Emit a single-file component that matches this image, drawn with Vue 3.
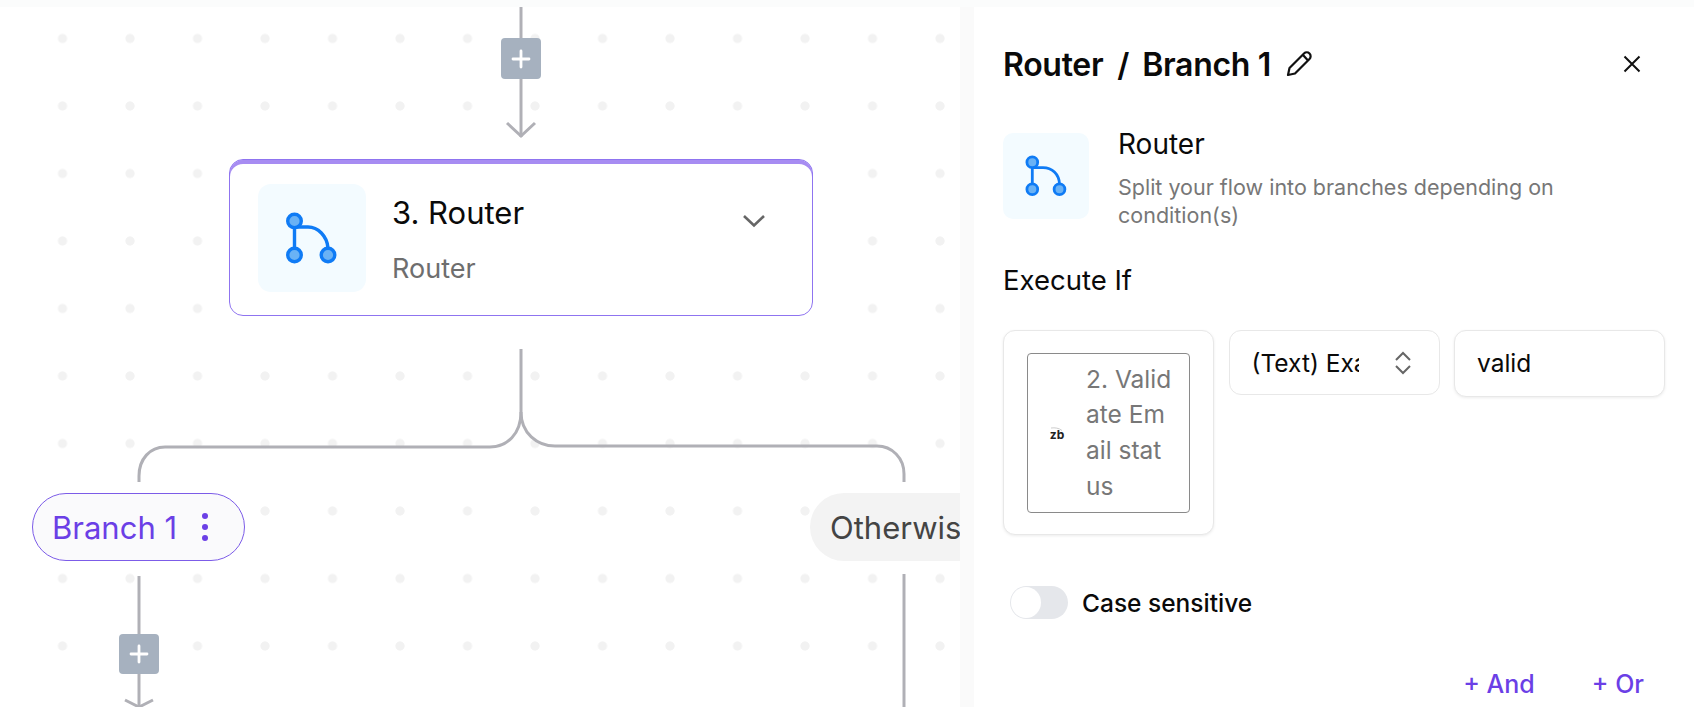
<template>
  <div class="page">
    <div class="top-strip"></div>
    <div class="main">
      <div class="canvas">
        <svg class="wires" width="960" height="700" viewBox="0 0 960 700" fill="none" stroke="#b0b0b6" stroke-width="3">
          <path d="M521 0V130" />
          <path d="M507 116L521 129L535 116" />
          <path d="M521 342V405C521 427 507 440 490 440H165C150 440 139 452 139 469V475" />
          <path d="M521 405C521 426 537 439 555 439H877C892 439 904 451 904 467V475" />
          <path d="M139 569V700" />
          <path d="M904 567V700" />
          <path d="M125 693L139 700L153 693" />
        </svg>

        <button class="add-btn add-top">
          <svg width="22" height="22" viewBox="0 0 22 22" stroke="#fff" stroke-width="2.8" stroke-linecap="round"><path d="M11 3V19M3 11H19" /></svg>
        </button>

        <div class="node">
          <div class="node-icon">
            <svg width="108" height="108" viewBox="0 0 108 108" fill="none">
              <path d="M36.5 37V71M36.5 43H50C60 43 69 52 70 64" stroke="#0f7bf5" stroke-width="3.4" />
              <g fill="#6ab2f5" stroke="#0f7bf5" stroke-width="3.4">
                <circle cx="36.5" cy="37" r="6.8" />
                <circle cx="36.5" cy="71" r="6.8" />
                <circle cx="70" cy="71" r="6.8" />
              </g>
            </svg>
          </div>
          <div class="node-text">
            <div class="node-title">3. Router</div>
            <div class="node-sub">Router</div>
          </div>
          <svg class="node-chevron" width="24" height="14" viewBox="0 0 24 14" fill="none" stroke="#666" stroke-width="2.6"><path d="M2 2L12 11.5L22 2" /></svg>
        </div>

        <div class="pill pill-active">
          <span>Branch 1</span>
          <span class="dots"><i></i><i></i><i></i></span>
        </div>
        <div class="pill pill-other"><span>Otherwise</span></div>

        <button class="add-btn add-bottom">
          <svg width="22" height="22" viewBox="0 0 22 22" stroke="#fff" stroke-width="2.8" stroke-linecap="round"><path d="M11 3V19M3 11H19" /></svg>
        </button>
      </div>

      <div class="divider"></div>

      <div class="panel">
        <div class="panel-head">
          <span class="crumb">Router</span>
          <span class="crumb slash">/</span>
          <span class="crumb">Branch 1</span>
          <svg class="pencil" width="28" height="28" viewBox="0 0 28 28" fill="none" stroke="#111" stroke-width="2.2" stroke-linejoin="round"><path d="M3 25L4.5 18L19 3.5C20.5 2 23 2 24.5 3.5C26 5 26 7.5 24.5 9L10 23.5L3 25ZM18 5L23 10.5" /></svg>
          <svg class="close" width="18" height="18" viewBox="0 0 18 18" stroke="#111" stroke-width="2"><path d="M1.5 1.5L16.5 16.5M16.5 1.5L1.5 16.5" /></svg>
        </div>

        <div class="info">
          <div class="info-icon">
            <svg width="86" height="86" viewBox="0 0 86 86" fill="none">
              <path d="M29.3 29V56M29.3 34.7H40C49 34.7 56 41 56.5 51" stroke="#0f7bf5" stroke-width="2.8" />
              <g fill="#6ab2f5" stroke="#0f7bf5" stroke-width="2.8">
                <circle cx="29.3" cy="29.3" r="5.4" />
                <circle cx="29.3" cy="56.3" r="5.4" />
                <circle cx="56.5" cy="56.3" r="5.4" />
              </g>
            </svg>
          </div>
          <div class="info-text">
            <div class="info-title">Router</div>
            <div class="info-desc">Split your flow into branches depending on condition(s)</div>
          </div>
        </div>

        <div class="section-title">Execute If</div>

        <div class="cond-row">
          <div class="box first-box">
            <div class="token">
              <div class="token-logo">
                <svg width="14" height="4" viewBox="0 0 14 4" fill="none" stroke="#ccc" stroke-width="1"><path d="M1 1C5 0.5 9 1 12 3.5" /></svg>
                <span>zb</span>
              </div>
              <div class="token-text">2. Valid<br />ate Em<br />ail stat<br />us</div>
            </div>
          </div>
          <div class="box select-box">
            <span class="select-text">(Text) Exactly matches</span>
            <svg width="18" height="24" viewBox="0 0 18 24" fill="none" stroke="#666" stroke-width="2"><path d="M2 9L9 2L16 9M2 15L9 22L16 15" /></svg>
          </div>
          <div class="box value-box">valid</div>
        </div>

        <div class="toggle-row">
          <div class="toggle"><div class="knob"></div></div>
          <span class="toggle-label">Case sensitive</span>
        </div>

        <div class="actions">
          <span>+ And</span>
          <span>+ Or</span>
        </div>
      </div>
    </div>
  </div>
</template>

<script setup>
</script>

<style>
html, body {
  margin: 0;
  background: #fff;
  overflow: hidden;
}
</style>

<style scoped>
.page {
  width: 1694px;
  height: 707px;
  overflow: hidden;
  display: flex;
  flex-direction: column;
  font-family: Inter, "Liberation Sans", sans-serif;
  background: #fff;
}

.top-strip {
  height: 7px;
  flex: none;
  background: #fbfcfc;
}

.main {
  flex: 1;
  display: flex;
  min-height: 0;
}

.canvas {
  position: relative;
  flex: none;
  width: 960px;
  overflow: hidden;
  background-image: radial-gradient(circle, #f2f2f2 4.2px, transparent 4.9px);
  background-size: 67.5px 67.5px;
  background-position: 28.75px -2.25px;
}

.wires {
  position: absolute;
  left: 0;
  top: 0;
}

.add-btn {
  position: absolute;
  width: 40px;
  height: 41px;
  padding: 0;
  border: none;
  border-radius: 4px;
  background: #a6b1bf;
  display: flex;
  align-items: center;
  justify-content: center;
}

.add-top {
  left: 501px;
  top: 31px;
}

.add-bottom {
  left: 119px;
  top: 627px;
  height: 40px;
}

.node {
  position: absolute;
  left: 229px;
  top: 152px;
  width: 584px;
  height: 157px;
  box-sizing: border-box;
  display: flex;
  align-items: center;
  padding: 0 46px 0 28px;
  background: #fff;
  border: 1px solid #8f74f0;
  border-radius: 14px;
  box-shadow: inset 0 4px 0 #a78cf2;
}

.node-icon {
  width: 108px;
  height: 108px;
  border-radius: 13px;
  background: #f3fbff;
  flex: none;
}

.node-text {
  margin: 4px 0 0 26px;
  flex: 1;
}

.node-title {
  font-size: 31px;
  line-height: 36px;
  color: #0a0a0a;
}

.node-sub {
  margin-top: 23.5px;
  font-size: 27px;
  line-height: 30px;
  color: #6e6e6e;
}

.node-chevron {
  margin-bottom: 34px;
}

.pill {
  position: absolute;
  height: 68px;
  box-sizing: border-box;
  display: flex;
  align-items: center;
  border-radius: 34px;
  font-size: 31px;
  white-space: nowrap;
}

.pill-active {
  left: 32px;
  top: 486px;
  width: 213px;
  padding-left: 19px;
  background: #fafafc;
  border: 1px solid #7c5ce8;
  color: #6b3fe6;
}

.dots {
  display: flex;
  flex-direction: column;
  gap: 5px;
  margin-left: 25px;
}

.dots i {
  display: block;
  width: 6px;
  height: 6px;
  border-radius: 50%;
  background: #6b3fe6;
}

.pill-other {
  left: 810px;
  top: 486px;
  width: 220px;
  padding-left: 20px;
  background: #f3f3f3;
  color: #444;
}

.divider {
  flex: none;
  width: 14px;
  background: #fafafa;
}

.panel {
  flex: 1;
  min-width: 0;
  padding: 0 25px 0 29px;
  background: #fff;
}

.panel-head {
  display: flex;
  align-items: center;
  height: 76px;
  margin-top: 19px;
}

.crumb {
  font-size: 32px;
  font-weight: 600;
  letter-spacing: -0.3px;
  color: #0a0a0a;
}

.slash {
  margin: 0 13px 0 14px;
}

.pencil {
  margin-left: 14px;
}

.close {
  margin-left: auto;
  margin-right: 28px;
}

.info {
  display: flex;
  margin-top: 31px;
}

.info-icon {
  width: 86px;
  height: 86px;
  flex: none;
  border-radius: 10px;
  background: #f3fbff;
}

.info-text {
  margin-left: 29px;
}

.info-title {
  font-size: 28px;
  line-height: 22px;
  color: #0a0a0a;
}

.info-desc {
  max-width: 445px;
  margin-top: 18px;
  font-size: 21.5px;
  line-height: 28px;
  color: #777;
}

.section-title {
  margin-top: 35px;
  font-size: 27.5px;
  line-height: 32px;
  color: #0a0a0a;
}

.cond-row {
  display: flex;
  align-items: flex-start;
  gap: 14.5px;
  margin-top: 34px;
}

.box {
  box-sizing: border-box;
  width: 211px;
  flex: none;
  background: #fff;
  border: 1px solid #e8e8e8;
  border-radius: 12px;
}

.first-box {
  height: 205px;
  padding: 22px 23px;
  box-shadow: 0 1px 3px rgba(0, 0, 0, 0.08);
}

.token {
  box-sizing: border-box;
  height: 160px;
  display: flex;
  align-items: center;
  border: 1px solid #8a8a8a;
  border-radius: 4px;
}

.token-logo {
  width: 58px;
  flex: none;
  display: flex;
  flex-direction: column;
  align-items: center;
  font-size: 12px;
  line-height: 11px;
  font-weight: 700;
  color: #222;
}

.token-logo svg {
  margin-bottom: -2px;
}

.token-text {
  font-size: 24.5px;
  line-height: 35.7px;
  color: #777;
  white-space: nowrap;
}

.select-box {
  height: 65px;
  display: flex;
  align-items: center;
  padding: 0 27px 0 22px;
}

.select-text {
  width: 107px;
  margin-right: 35px;
  overflow: hidden;
  white-space: nowrap;
  font-size: 24.5px;
  color: #0a0a0a;
}

.value-box {
  height: 67px;
  line-height: 65px;
  padding-left: 22px;
  font-size: 24.5px;
  color: #0a0a0a;
  box-shadow: 0 1px 3px rgba(0, 0, 0, 0.08);
}

.toggle-row {
  display: flex;
  align-items: center;
  margin-top: 51px;
  padding-left: 7px;
}

.toggle {
  width: 58px;
  height: 33px;
  border-radius: 17px;
  background: #e5e7eb;
  position: relative;
}

.knob {
  position: absolute;
  left: 1px;
  top: 1px;
  width: 30px;
  height: 31px;
  border-radius: 50%;
  background: #fff;
}

.toggle-label {
  margin-left: 14px;
  font-size: 24.5px;
  font-weight: 500;
  color: #0a0a0a;
}

.actions {
  display: flex;
  justify-content: flex-end;
  gap: 57px;
  margin-top: 50px;
  padding-right: 25px;
  font-size: 25px;
  font-weight: 500;
  color: #6b3fe6;
}
</style>
